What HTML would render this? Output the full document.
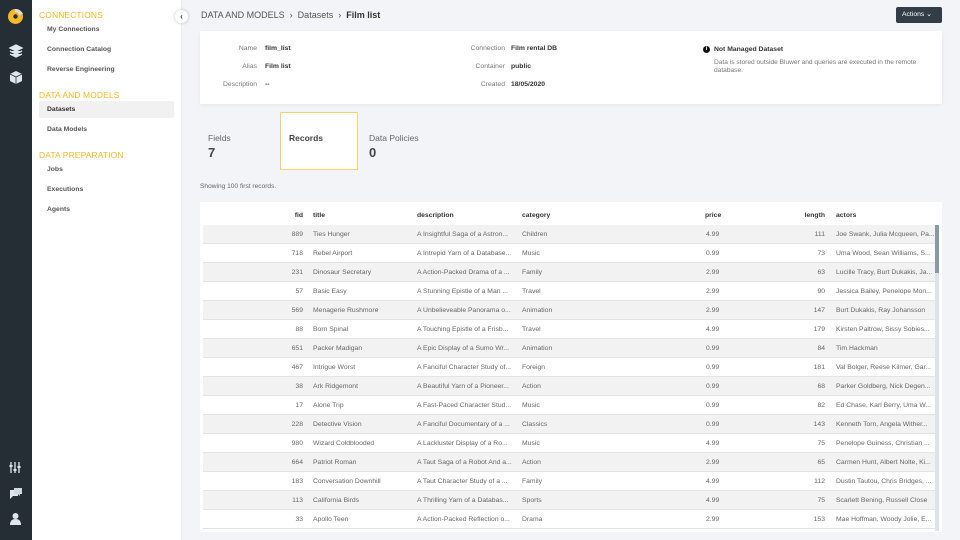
<!DOCTYPE html>
<html><head><meta charset="utf-8"><style>
*{box-sizing:border-box;margin:0;padding:0}
body{width:960px;height:540px;overflow:hidden;background:#f3f4f7;font-family:"Liberation Sans",sans-serif;position:relative;color:#333}
.rail{position:absolute;left:0;top:0;width:32px;height:540px;background:#252d35}
.side{position:absolute;left:32px;top:0;width:150px;height:540px;background:#fff;border-right:1px solid #e6e8ec}
.sec{position:absolute;left:7px;font-size:8.5px;color:#f5b829;letter-spacing:.1px}
.it{position:absolute;left:15px;font-size:6.8px;color:#555;font-weight:bold}
.sel{position:absolute;left:7px;top:101px;width:135px;height:17px;background:#f1f1f2;border-radius:2px}
.coll{position:absolute;left:175px;top:10px;width:13px;height:13px;border-radius:50%;background:#fff;box-shadow:0 0 3px rgba(0,0,0,.25);font-size:8px;text-align:center;line-height:13px;color:#333;font-weight:bold}
.bc{position:absolute;left:201px;top:10px;font-size:9px;color:#555}
.bc b{color:#333}
.act{position:absolute;left:896px;top:7px;width:46px;height:16px;background:#333d47;border-radius:2px;color:#fff;font-size:6.8px;line-height:16px;padding-left:6px}
.info{position:absolute;left:200px;top:31px;width:742px;height:73px;background:#fff;box-shadow:0 1px 4px rgba(0,0,0,.06)}
.lb{position:absolute;font-size:6.8px;color:#777;text-align:right;width:80px}
.vl{position:absolute;font-size:6.8px;color:#333;font-weight:bold}
.tab{position:absolute;font-size:8.5px;color:#666}
.num{position:absolute;font-size:13px;font-weight:bold;color:#444}
.card{position:absolute;left:200px;top:202px;width:742px;height:330px;background:#fff}
.row{position:absolute;left:3px;width:733px;height:19px;font-size:6.8px;color:#666;border-bottom:1px solid #e4e4e4}
.row span{position:absolute;top:6px;white-space:nowrap}
.g{background:#f2f2f2}
.h{font-weight:bold;color:#333}
</style></head><body>
<div class="rail">
<svg width="32" height="540" style="position:absolute;left:0;top:0">
<circle cx="15.5" cy="16.5" r="7.5" fill="#f5b829"/><circle cx="15.5" cy="16.5" r="2.2" fill="#252d35"/>
<path d="M15 9 A8 8 0 0 1 23 14 L19 15 A4 4 0 0 0 15 12Z" fill="#ddd"/>
<path d="M10 48 L16 45 L22 48 L16 51Z M10 51 L16 54 L22 51 M10 54 L16 57 L22 54" fill="#e0e6ee" stroke="#e0e6ee" stroke-width="1.3"/>
<path d="M16 71 L22 74 L22 81 L16 84 L10 81 L10 74Z" fill="#e0e6ee"/><path d="M10 74 L16 77 L22 74 M16 77 L16 84" stroke="#252d35" stroke-width=".8" fill="none"/>
<path d="M11 462v11M15 462v11M19 462v11" stroke="#e0e6ee" stroke-width="1.3"/><rect x="9.5" y="465" width="3" height="2" fill="#e0e6ee"/><rect x="13.5" y="469" width="3" height="2" fill="#e0e6ee"/><rect x="17.5" y="466" width="3" height="2" fill="#e0e6ee"/>
<path d="M10 490h8v6h-5l-3 3z" fill="#e0e6ee"/><path d="M14 488h8v6h-2v2l-2-2h-4z" fill="#cfd8e3"/>
<circle cx="15.5" cy="516" r="3" fill="#e0e6ee"/><path d="M10 525 Q10 519 15.5 519 Q21 519 21 525Z" fill="#e0e6ee"/>
</svg></div>
<div class="side">
<div class="sec" style="top:10px">CONNECTIONS</div>
<div class="it" style="top:26px">My Connections</div>
<div class="it" style="top:46px">Connection Catalog</div>
<div class="it" style="top:66px">Reverse Engineering</div>
<div class="sec" style="top:90px">DATA AND MODELS</div>
<div class="sel"></div>
<div class="it" style="top:106px;color:#333">Datasets</div>
<div class="it" style="top:126px">Data Models</div>
<div class="sec" style="top:150px">DATA PREPARATION</div>
<div class="it" style="top:166px">Jobs</div>
<div class="it" style="top:186px">Executions</div>
<div class="it" style="top:206px">Agents</div>
</div>
<div class="coll">‹</div>
<div class="bc">DATA AND MODELS &nbsp;›&nbsp; Datasets &nbsp;›&nbsp; <b>Film list</b></div>
<div class="act">Actions ⌄</div>
<div class="info">
<div class="lb" style="left:-23px;top:14px">Name</div><div class="vl" style="left:65px;top:14px">film_list</div>
<div class="lb" style="left:-23px;top:32px">Alias</div><div class="vl" style="left:65px;top:32px">Film list</div>
<div class="lb" style="left:-23px;top:50px">Description</div><div class="vl" style="left:65px;top:50px">--</div>
<div class="lb" style="left:225px;top:14px">Connection</div><div class="vl" style="left:311px;top:14px">Film rental DB</div>
<div class="lb" style="left:225px;top:32px">Container</div><div class="vl" style="left:311px;top:32px">public</div>
<div class="lb" style="left:225px;top:50px">Created</div><div class="vl" style="left:311px;top:50px">18/05/2020</div>
<div style="position:absolute;left:503px;top:15px;width:7px;height:7px;border-radius:50%;background:#111;color:#fff;font-size:6px;line-height:7px;text-align:center;font-weight:bold">i</div>
<div class="vl" style="left:514px;top:15px">Not Managed Dataset</div>
<div style="position:absolute;left:514px;top:28px;width:215px;font-size:6.6px;color:#777;line-height:8px">Data is stored outside Bluwer and queries are executed in the remote database.</div>
</div>
<div class="tab" style="left:208px;top:133px">Fields</div><div class="num" style="left:208px;top:145px">7</div>
<div style="position:absolute;left:280px;top:112px;width:78px;height:58px;background:#fff;border:1px solid #f5d36a"></div>
<div class="tab" style="left:289px;top:133px;font-weight:bold;color:#444">Records</div>
<div class="tab" style="left:369px;top:133px">Data Policies</div><div class="num" style="left:369px;top:145px">0</div>
<div style="position:absolute;left:200px;top:183px;font-size:6.6px;color:#666">Showing 100 first records.</div>
<div class="card">
<div class="row h" style="top:4px;border:none"><span style="right:633px">fid</span><span style="left:110px">title</span><span style="left:214px">description</span><span style="left:319px">category</span><span style="left:502px">price</span><span style="right:111px">length</span><span style="left:633px">actors</span></div>
<div id="rows"></div>
<div style="position:absolute;left:735px;top:23px;width:4px;height:306px;background:#dde3ea"></div>
<div style="position:absolute;left:735px;top:23px;width:4px;height:48px;background:#8a99a8"></div>
</div>
<script>
var d=[["889","Ties Hunger","A Insightful Saga of a Astron...","Children","4.99","111","Joe Swank, Julia Mcqueen, Pa..."],
["718","Rebel Airport","A Intrepid Yarn of a Database...","Music","0.99","73","Uma Wood, Sean Williams, S..."],
["231","Dinosaur Secretary","A Action-Packed Drama of a ...","Family","2.99","63","Lucille Tracy, Burt Dukakis, Ja..."],
["57","Basic Easy","A Stunning Epistle of a Man ...","Travel","2.99","90","Jessica Bailey, Penelope Mon..."],
["569","Menagerie Rushmore","A Unbelieveable Panorama o...","Animation","2.99","147","Burt Dukakis, Ray Johansson"],
["88","Born Spinal","A Touching Epistle of a Frisb...","Travel","4.99","179","Kirsten Paltrow, Sissy Sobies..."],
["651","Packer Madigan","A Epic Display of a Sumo Wr...","Animation","0.99","84","Tim Hackman"],
["467","Intrigue Worst","A Fanciful Character Study of...","Foreign","0.99","181","Val Bolger, Reese Kilmer, Gar..."],
["38","Ark Ridgemont","A Beautiful Yarn of a Pioneer...","Action","0.99","68","Parker Goldberg, Nick Degen..."],
["17","Alone Trip","A Fast-Paced Character Stud...","Music","0.99","82","Ed Chase, Karl Berry, Uma W..."],
["228","Detective Vision","A Fanciful Documentary of a ...","Classics","0.99","143","Kenneth Torn, Angela Wither..."],
["980","Wizard Coldblooded","A Lackluster Display of a Ro...","Music","4.99","75","Penelope Guiness, Christian ..."],
["664","Patriot Roman","A Taut Saga of a Robot And a...","Action","2.99","65","Carmen Hunt, Albert Nolte, Ki..."],
["183","Conversation Downhill","A Taut Character Study of a ...","Family","4.99","112","Dustin Tautou, Chris Bridges, ..."],
["113","California Birds","A Thrilling Yarn of a Databas...","Sports","4.99","75","Scarlett Bening, Russell Close"],
["33","Apollo Teen","A Action-Packed Reflection o...","Drama","2.99","153","Mae Hoffman, Woody Jolie, E..."]];
var h="";d.forEach(function(r,i){h+='<div class="row'+(i%2==0?' g':'')+'" style="top:'+(23+i*19)+'px"><span style="right:633px">'+r[0]+'</span><span style="left:110px">'+r[1]+'</span><span style="left:214px">'+r[2]+'</span><span style="left:319px">'+r[3]+'</span><span style="left:503px">'+r[4]+'</span><span style="right:111px">'+r[5]+'</span><span style="left:633px">'+r[6]+'</span></div>'});
document.getElementById("rows").innerHTML=h;
</script>
</body></html>
